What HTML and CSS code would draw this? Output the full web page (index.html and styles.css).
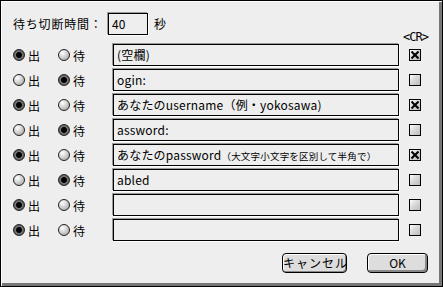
FILE: index.html
```html
<!DOCTYPE html>
<html lang="ja">
<head>
  <meta charset="UTF-8" />
  <title>接続スクリプト</title>
  <link rel="stylesheet" href="styles.css">
</head>
<body>
  <div class="dialog">
    <div class="top">
      <span class="label">待ち切断時間：</span>
      <span class="field small">40</span>
      <span class="unit">秒</span>
      <span class="cr">&lt;CR&gt;</span>
    </div>

    <div class="rows">
      <span class="opt"><i class="radio on"></i>出</span>
      <span class="opt"><i class="radio"></i>待</span>
      <span class="field">(空欄)</span>
      <i class="check on"></i>

      <span class="opt"><i class="radio"></i>出</span>
      <span class="opt"><i class="radio on"></i>待</span>
      <span class="field">ogin:</span>
      <i class="check"></i>

      <span class="opt"><i class="radio on"></i>出</span>
      <span class="opt"><i class="radio"></i>待</span>
      <span class="field">あなたのusername（例・yokosawa)</span>
      <i class="check on"></i>

      <span class="opt"><i class="radio"></i>出</span>
      <span class="opt"><i class="radio on"></i>待</span>
      <span class="field">assword:</span>
      <i class="check"></i>

      <span class="opt"><i class="radio on"></i>出</span>
      <span class="opt"><i class="radio"></i>待</span>
      <span class="field">あなたのpassword<small>（大文字小文字を区別して半角で）</small></span>
      <i class="check on"></i>

      <span class="opt"><i class="radio"></i>出</span>
      <span class="opt"><i class="radio on"></i>待</span>
      <span class="field">abled</span>
      <i class="check"></i>

      <span class="opt"><i class="radio on"></i>出</span>
      <span class="opt"><i class="radio"></i>待</span>
      <span class="field"></span>
      <i class="check"></i>

      <span class="opt"><i class="radio on"></i>出</span>
      <span class="opt"><i class="radio"></i>待</span>
      <span class="field"></span>
      <i class="check"></i>
    </div>

    <div class="buttons">
      <button class="btn cancel">キャンセル</button>
      <button class="btn ok">OK</button>
    </div>
  </div>
</body>
</html>
```

FILE: styles.css
```css
* {
  margin: 0;
  padding: 0;
  box-sizing: border-box;
}
body {
  background: #eeeeee;
  font-family: "Noto Sans CJK JP", "DejaVu Sans", sans-serif;
  font-size: 12px;
  color: #000;
}
.dialog {
  width: 443px;
  height: 287px;
  background: #eeeeee;
  border: 1px solid #000;
  box-shadow: inset 1px 1px 0 #fff, inset -3px -3px 0 #777;
  padding: 12px 0 0 12px;
}

/* top line */
.top {
  display: flex;
  align-items: flex-start;
  height: 30px;
}
.label {
  line-height: 22px;
  width: 95px;
  letter-spacing: 0.8px;
}
.field {
  display: block;
  height: 22px;
  border: 1px solid #000;
  box-shadow: -1px -1px 0 #999, 1px 1px 0 #fff;
  background: #eeeeee;
  line-height: 20px;
  padding-left: 3px;
  white-space: nowrap;
  overflow: hidden;
  letter-spacing: 0.2px;
}
.field.small {
  width: 40px;
}
.field small {
  font-size: 9.5px;
}
.unit {
  line-height: 22px;
  margin-left: 6px;
}
.cr {
  margin-left: auto;
  margin-right: 14px;
  align-self: flex-end;
  font-family: "DejaVu Sans Mono", monospace;
  font-size: 12px;
  line-height: 12px;
  letter-spacing: -1px;
}

/* rows */
.rows {
  display: grid;
  grid-template-columns: 45px 55px 286px 22px;
  grid-auto-rows: 22px;
  row-gap: 3px;
  align-items: center;
  margin-top: 1px;
}
.opt {
  display: flex;
  align-items: center;
  gap: 3px;
  font-size: 12px;
}
.radio {
  display: inline-block;
  width: 12px;
  height: 12px;
  border-radius: 50%;
  border: 1px solid #222;
  background: radial-gradient(circle at 35% 30%, #fff 0, #ddd 35%, #999 100%);
}
.radio.on {
  background: radial-gradient(circle, #000 0, #000 2.5px, #777 3.5px, #333 100%);
}
.check {
  display: block;
  justify-self: end;
  width: 12px;
  height: 12px;
  border: 1px solid #000;
  background: linear-gradient(135deg, #fff 0, #ddd 40%, #bbb 100%);
  position: relative;
}
.check.on::before,
.check.on::after {
  content: "";
  position: absolute;
  left: 4px;
  top: 0;
  width: 2px;
  height: 10px;
  background: #000;
  transform: rotate(45deg);
}
.check.on::after {
  transform: rotate(-45deg);
}

/* buttons */
.buttons {
  display: flex;
  gap: 20px;
  margin: 12px 0 0 269px;
}
.btn {
  height: 20px;
  padding: 0;
  white-space: nowrap;
  font-family: inherit;
  font-size: 12px;
  line-height: 18px;
  border: 1px solid #000;
  border-radius: 4px;
  background: #dddddd;
  box-shadow: inset 1px 1px 0 #fff, inset -1px -1px 0 #888;
  color: #000;
}
.btn.cancel {
  width: 65px;
  letter-spacing: 1px;
}
.btn.ok {
  width: 61px;
  box-shadow: inset 1px 1px 0 #fff, inset -2px -2px 0 #888;
}
```
